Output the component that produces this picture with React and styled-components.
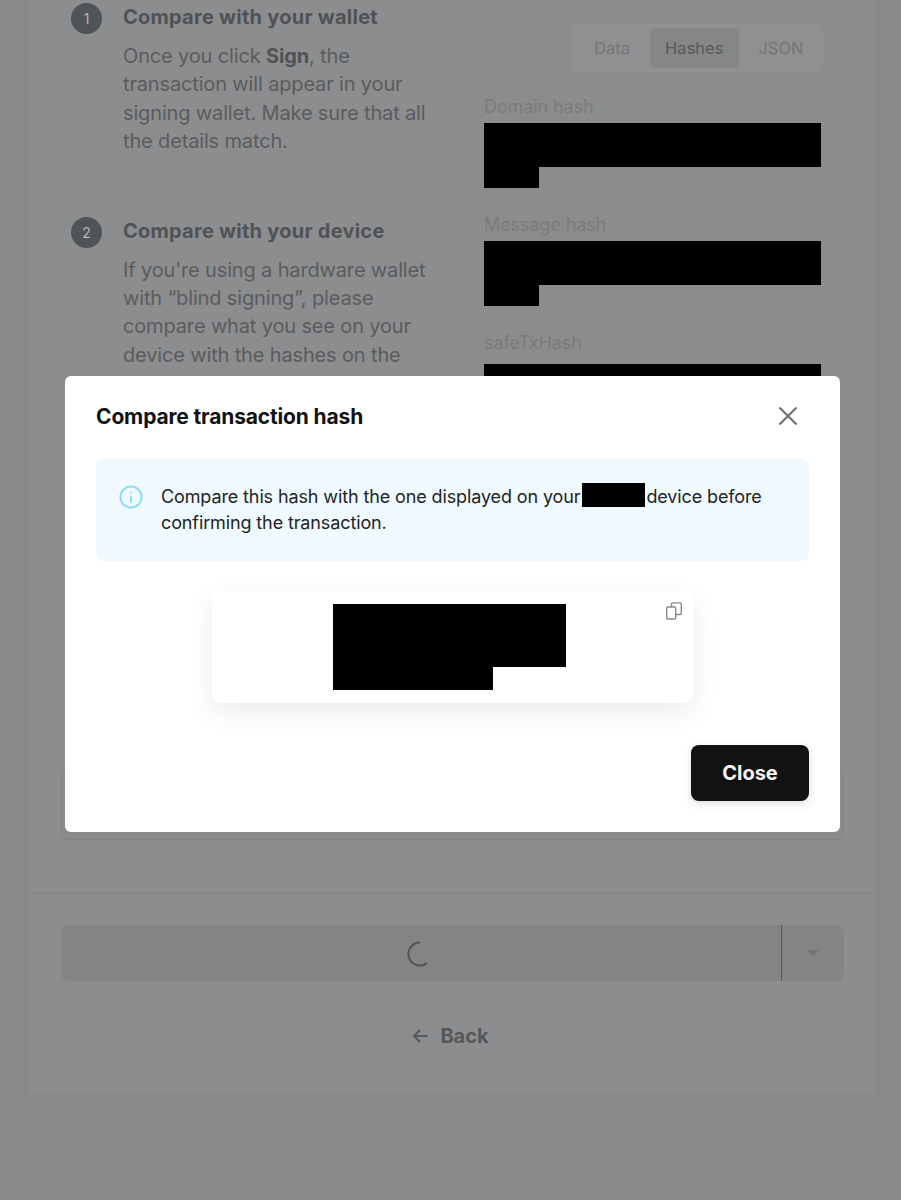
import React from 'react';
import styled, { createGlobalStyle } from 'styled-components';

const GlobalStyle = createGlobalStyle`
  html, body {
    margin: 0;
    height: 1200px;
    overflow: hidden;
    background: #88898a;
    font-family: 'Inter', 'Liberation Sans', sans-serif;
  }
  * {
    box-sizing: border-box;
  }
`;

const Card = styled.main`
  margin: 0 26px 0 29px;
  height: 1094px;
  padding-top: 3px;
  background: #8c8d8e;
`;

const Columns = styled.div`
  display: grid;
  grid-template-columns: 402px 380px;
  height: 741px;
  margin: 0 31px 24px 32px;
  overflow: hidden;
`;

const Steps = styled.div`
  display: flex;
  flex-direction: column;
  gap: 61px;
  padding-left: 10px;
`;

const Step = styled.section`
  display: grid;
  grid-template-columns: 31px 1fr;
  column-gap: 21px;
`;

const StepNumber = styled.div`
  display: flex;
  align-items: center;
  justify-content: center;
  width: 31px;
  height: 31px;
  border-radius: 50%;
  background: #4f5456;
  color: #b5b7b8;
  font-size: 14px;
`;

const StepTitle = styled.h3`
  margin: 0 0 11px;
  font-size: 20px;
  line-height: 28px;
  font-weight: 700;
  letter-spacing: 0.25px;
  color: #505355;
`;

const StepBody = styled.p`
  grid-column: 2;
  max-width: 315px;
  margin: 0;
  font-size: 20px;
  line-height: 28.4px;
  letter-spacing: -0.15px;
  color: #5a5c5e;

  b {
    font-weight: 700;
    color: #505355;
  }
`;

const Panel = styled.aside`
  padding: 19px 19px 0 20px;
  background: #8b8c8d;
  border: 1px solid #8a8b8c;
  border-radius: 8px;
`;

const Tabs = styled.div`
  display: flex;
  justify-content: flex-end;
  gap: 4px;
  width: 250px;
  height: 50px;
  margin-left: auto;
  padding: 5px 4px 5px 5px;
  background: #8f9091;
  border-radius: 6px;
`;

const Tab = styled.div`
  display: flex;
  align-items: center;
  padding: 0 15.5px;
  border-radius: 6px;
  font-size: 16.5px;
  background: ${(p) => (p.$active ? '#858687' : 'transparent')};
  color: ${(p) => (p.$active ? '#56595b' : '#747678')};
`;

const HashRow = styled.div`
  padding: ${(p) => (p.$first ? '22px' : '12px')} 0 12px;
  border-bottom: 1px solid #868788;

  &:last-child {
    border-bottom: none;
  }
`;

const HashLabel = styled.div`
  margin-bottom: ${(p) => p.$gap}px;
  font-size: 18px;
  line-height: 24px;
  letter-spacing: -0.1px;
  color: #7a7b7c;
`;

const Redacted = styled.div`
  width: ${(p) => p.$w}px;
  height: ${(p) => p.$h}px;
  background: #000;
`;

const CheckBox = styled.div`
  height: 72px;
  margin: 0 31px 0 32px;
  border: 1px solid #808183;
  border-radius: 8px;
  background: #8a8b8c;
`;

const Divider = styled.hr`
  height: 2px;
  margin: 52px 0 0;
  border: none;
  background: #848586;
`;

const Footer = styled.footer`
  display: flex;
  flex-direction: column;
  align-items: stretch;
  padding: 31px 31px 0 32px;
`;

const SignButton = styled.div`
  display: grid;
  grid-template-columns: 1fr 62px;
  height: 56px;
  background: #838486;
  border-radius: 8px;
`;

const SpinnerSlot = styled.div`
  display: flex;
  align-items: center;
  justify-content: center;
  padding: 2px 2px 0 0;
  border-right: 1px solid #55585a;
`;

const CaretSlot = styled.div`
  display: flex;
  align-items: center;
  justify-content: center;
`;

const Caret = styled.span`
  width: 0;
  height: 0;
  border-left: 6px solid transparent;
  border-right: 6px solid transparent;
  border-top: 7px solid #747678;
`;

const BackLink = styled.div`
  display: flex;
  align-items: center;
  justify-content: center;
  gap: 12px;
  height: 24px;
  margin-top: 43px;
  padding-right: 4px;
  font-size: 20px;
  font-weight: 700;
  color: #55585a;
`;

const Overlay = styled.div`
  position: fixed;
  inset: 0;
  display: flex;
  align-items: center;
  justify-content: center;
  padding: 8px 0 0 4px;
`;

const Modal = styled.div`
  width: 775px;
  height: 456px;
  padding: 27px 31px 31px;
  background: #fff;
  border-radius: 6px;
`;

const ModalHeader = styled.header`
  display: flex;
  align-items: center;
  justify-content: space-between;
  height: 26px;
  margin-bottom: 30px;
  padding-right: 11px;
`;

const ModalTitle = styled.h2`
  margin: 0;
  font-size: 21px;
  font-weight: 700;
  letter-spacing: -0.15px;
  color: #121212;
`;

const Alert = styled.div`
  display: grid;
  grid-template-columns: 24px 1fr;
  column-gap: 18px;
  height: 102px;
  padding: 24px 23px;
  background: #f0fafe;
  border-radius: 8px;
`;

const AlertText = styled.p`
  margin: 0;
  font-size: 18px;
  line-height: 26px;
  letter-spacing: -0.12px;
  color: #222426;
`;

const InlineRedacted = styled.span`
  display: inline-block;
  width: 63px;
  height: 24px;
  margin: 0 1px 0 2px;
  background: #000;
  vertical-align: -4px;
`;

const HashCard = styled.div`
  position: relative;
  width: 481px;
  height: 111px;
  margin: 31px auto 42px;
  padding: 12px 0 0 121px;
  background: #fff;
  border-radius: 8px;
  box-shadow: 0 8px 24px rgba(40, 54, 61, 0.1);
`;

const CopyButton = styled.div`
  position: absolute;
  top: 10px;
  right: 10px;
  line-height: 0;
`;

const ModalActions = styled.div`
  display: flex;
  justify-content: flex-end;
`;

const CloseButton = styled.button`
  width: 118px;
  height: 56px;
  border: none;
  border-radius: 8px;
  background: #121212;
  color: #f4f4f4;
  font-family: inherit;
  font-size: 20px;
  font-weight: 700;
  box-shadow: 0 3px 8px rgba(40, 54, 61, 0.16);
`;

const InfoSvg = styled.svg`
  margin-top: 2px;
`;

const CloseIcon = () => (
  <svg width="20" height="20" viewBox="0 0 20 20" fill="none" stroke="#6b6d6f" strokeWidth="2">
    <path d="M1.5 1.5 18.5 18.5M18.5 1.5 1.5 18.5" />
  </svg>
);

const InfoIcon = () => (
  <InfoSvg width="24" height="24" viewBox="0 0 24 24" fill="none" stroke="#8edcf5" strokeWidth="2" strokeLinecap="round">
    <circle cx="12" cy="12" r="10.5" />
    <path d="M12 11.5v5.5M12 7.5v.2" />
  </InfoSvg>
);

const CopyIcon = () => (
  <svg width="18" height="18" viewBox="0 0 18 18" fill="none" stroke="#87898b" strokeWidth="1.4">
    <rect x="1.7" y="5" width="9" height="12" rx="1" />
    <path d="M6.5 5V1.9a1 1 0 0 1 1-1h7.8a1 1 0 0 1 1 1v9.6a1 1 0 0 1-1 1h-4.6" />
  </svg>
);

const Spinner = () => (
  <svg width="26" height="26" viewBox="0 0 26 26" fill="none" stroke="#505355" strokeWidth="2">
    <path d="M13 1.5A11.5 11.5 0 1 0 20 22.1" />
  </svg>
);

const BackArrow = () => (
  <svg width="16" height="16" viewBox="0 0 16 16" fill="none" stroke="#55585a" strokeWidth="2">
    <path d="M15.5 8H2M8 2 2 8l6 6" />
  </svg>
);

const hashes = [
  { label: 'Domain hash', gap: 4, blocks: [[337, 44], [55, 21]] },
  { label: 'Message hash', gap: 4, blocks: [[337, 44], [55, 21]] },
  { label: 'safeTxHash', gap: 9, blocks: [[337, 44], [55, 22]] },
];

const App = () => {
  return (
    <>
      <GlobalStyle />
      <Card>
        <Columns>
          <Steps>
            <Step>
              <StepNumber>1</StepNumber>
              <StepTitle>Compare with your wallet</StepTitle>
              <StepBody>
                Once you click <b>Sign</b>, the transaction will appear in your signing wallet. Make
                sure that all the details match.
              </StepBody>
            </Step>
            <Step>
              <StepNumber>2</StepNumber>
              <StepTitle>Compare with your device</StepTitle>
              <StepBody>
                If you're using a hardware wallet with “blind signing”, please compare what you see
                on your device with the hashes on the
              </StepBody>
            </Step>
          </Steps>
          <Panel>
            <Tabs>
              <Tab>Data</Tab>
              <Tab $active>Hashes</Tab>
              <Tab>JSON</Tab>
            </Tabs>
            {hashes.map((hash, i) => (
              <HashRow key={hash.label} $first={i === 0}>
                <HashLabel $gap={hash.gap}>{hash.label}</HashLabel>
                {hash.blocks.map(([w, h], j) => (
                  <Redacted key={j} $w={w} $h={h} />
                ))}
              </HashRow>
            ))}
          </Panel>
        </Columns>
        <CheckBox />
        <Divider />
        <Footer>
          <SignButton>
            <SpinnerSlot>
              <Spinner />
            </SpinnerSlot>
            <CaretSlot>
              <Caret />
            </CaretSlot>
          </SignButton>
          <BackLink>
            <BackArrow />
            Back
          </BackLink>
        </Footer>
      </Card>
      <Overlay>
        <Modal>
          <ModalHeader>
            <ModalTitle>Compare transaction hash</ModalTitle>
            <CloseIcon />
          </ModalHeader>
          <Alert>
            <InfoIcon />
            <AlertText>
              Compare this hash with the one displayed on your<InlineRedacted />device before
              confirming the transaction.
            </AlertText>
          </Alert>
          <HashCard>
            <Redacted $w={233} $h={63} />
            <Redacted $w={160} $h={23} />
            <CopyButton>
              <CopyIcon />
            </CopyButton>
          </HashCard>
          <ModalActions>
            <CloseButton>Close</CloseButton>
          </ModalActions>
        </Modal>
      </Overlay>
    </>
  );
};

export default App;
